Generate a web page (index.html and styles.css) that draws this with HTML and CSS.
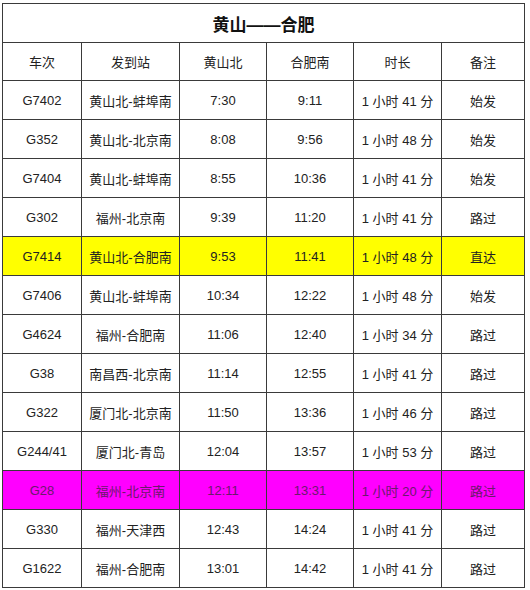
FILE: index.html
```html
<!DOCTYPE html>
<html lang="zh">
<head>
<meta charset="utf-8">
<link rel="stylesheet" href="styles.css">
</head>
<body>
<table class="schedule">
  <colgroup>
    <col class="c1"><col class="c2"><col class="c3"><col class="c4"><col class="c5"><col class="c6">
  </colgroup>
  <thead>
    <tr class="title-row"><th colspan="6">黄山——合肥</th></tr>
    <tr class="head-row"><td>车次</td><td>发到站</td><td>黄山北</td><td>合肥南</td><td>时长</td><td>备注</td></tr>
  </thead>
  <tbody>
    <tr><td>G7402</td><td>黄山北-蚌埠南</td><td>7:30</td><td>9:11</td><td>1 小时 41 分</td><td>始发</td></tr>
    <tr><td>G352</td><td>黄山北-北京南</td><td>8:08</td><td>9:56</td><td>1 小时 48 分</td><td>始发</td></tr>
    <tr><td>G7404</td><td>黄山北-蚌埠南</td><td>8:55</td><td>10:36</td><td>1 小时 41 分</td><td>始发</td></tr>
    <tr><td>G302</td><td>福州-北京南</td><td>9:39</td><td>11:20</td><td>1 小时 41 分</td><td>路过</td></tr>
    <tr class="yellow"><td>G7414</td><td>黄山北-合肥南</td><td>9:53</td><td>11:41</td><td>1 小时 48 分</td><td>直达</td></tr>
    <tr><td>G7406</td><td>黄山北-蚌埠南</td><td>10:34</td><td>12:22</td><td>1 小时 48 分</td><td>始发</td></tr>
    <tr><td>G4624</td><td>福州-合肥南</td><td>11:06</td><td>12:40</td><td>1 小时 34 分</td><td>路过</td></tr>
    <tr><td>G38</td><td>南昌西-北京南</td><td>11:14</td><td>12:55</td><td>1 小时 41 分</td><td>路过</td></tr>
    <tr><td>G322</td><td>厦门北-北京南</td><td>11:50</td><td>13:36</td><td>1 小时 46 分</td><td>路过</td></tr>
    <tr><td>G244/41</td><td>厦门北-青岛</td><td>12:04</td><td>13:57</td><td>1 小时 53 分</td><td>路过</td></tr>
    <tr class="magenta"><td>G28</td><td>福州-北京南</td><td>12:11</td><td>13:31</td><td>1 小时 20 分</td><td>路过</td></tr>
    <tr><td>G330</td><td>福州-天津西</td><td>12:43</td><td>14:24</td><td>1 小时 41 分</td><td>路过</td></tr>
    <tr><td>G1622</td><td>福州-合肥南</td><td>13:01</td><td>14:42</td><td>1 小时 41 分</td><td>路过</td></tr>
  </tbody>
</table>
</body>
</html>
```

FILE: styles.css
```css
html, body {
  margin: 0;
  padding: 0;
  background: #ffffff;
}
body {
  padding: 3px 0 0 2px;
  font-family: "Liberation Sans", "Noto Sans CJK SC", sans-serif;
  color: #222222;
}
.schedule {
  border-collapse: collapse;
  table-layout: fixed;
  width: 522px;
}
.c1 { width: 79px; }
.c2 { width: 98px; }
.c3 { width: 87px; }
.c4 { width: 87px; }
.c5 { width: 88px; }
.c6 { width: 83px; }
.schedule th,
.schedule td {
  border: 1px solid #3a3a3a;
  padding: 0;
  text-align: center;
  font-size: 13px;
  height: 38px;
  white-space: nowrap;
}
.title-row th {
  font-size: 17px;
  font-weight: bold;
  color: #111111;
  height: 38px;
}
.head-row td {
  height: 37px;
}
.yellow td {
  background: #ffff00;
}
.magenta td {
  background: #ff00ff;
  color: #6b1a6b;
}
```
